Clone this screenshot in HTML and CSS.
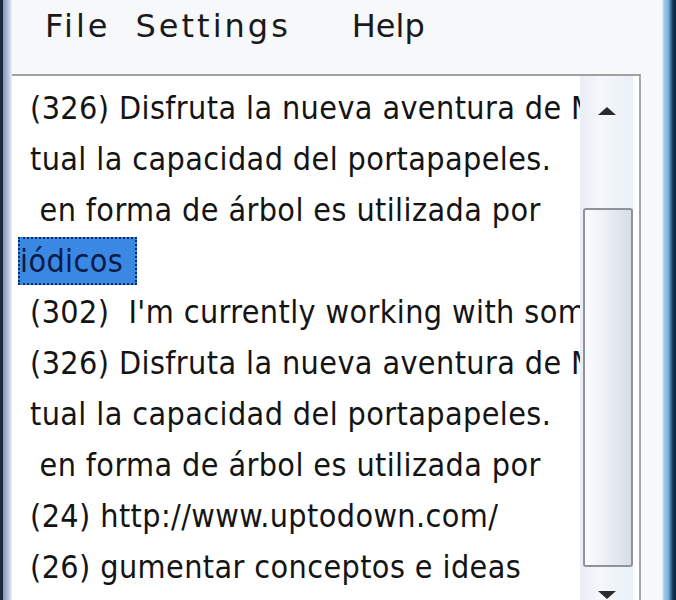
FILE: index.html
```html
<!DOCTYPE html>
<html>
<head>
<meta charset="utf-8">
<link rel="stylesheet" href="styles.css">
</head>
<body>
<div class="window">
  <div class="frame-left"></div>
  <div class="client">
    <div class="menubar">
      <span class="menu-item menu-file">File</span>
      <span class="menu-item menu-settings">Settings</span>
      <span class="menu-item menu-help">Help</span>
    </div>
    <div class="listbox">
      <div class="items">
        <div class="row">(326) Disfruta la nueva aventura de Mario</div>
        <div class="row">tual la capacidad del portapapeles.</div>
        <div class="row">&nbsp;en forma de árbol es utilizada por</div>
        <div class="row row-sel"><span class="sel">iódicos</span></div>
        <div class="row">(302)&nbsp; I'm currently working with something</div>
        <div class="row">(326) Disfruta la nueva aventura de Mario</div>
        <div class="row">tual la capacidad del portapapeles.</div>
        <div class="row">&nbsp;en forma de árbol es utilizada por</div>
        <div class="row">(24) http://www.uptodown.com/</div>
        <div class="row">(26) gumentar conceptos e ideas</div>
      </div>
      <div class="scrollbar">
        <div class="sb-btn sb-up"><svg width="22" height="10" viewBox="0 0 22 10"><path d="M2 9 L11 1 L20 9 Z" fill="#2b2b2b"/></svg></div>
        <div class="sb-track">
          <div class="sb-thumb"></div>
        </div>
        <div class="sb-btn sb-down"><svg width="22" height="10" viewBox="0 0 22 10"><path d="M2 1 L20 1 L11 9 Z" fill="#2b2b2b"/></svg></div>
      </div>
    </div>
  </div>
  <div class="frame-right"></div>
</div>
</body>
</html>
```
FILE: styles.css
```css
html, body {
  margin: 0;
  padding: 0;
  width: 676px;
  height: 600px;
  overflow: hidden;
  background: #ffffff;
}
.window {
  display: flex;
  width: 676px;
  height: 600px;
}
.frame-left {
  width: 12px;
  flex: none;
  background: linear-gradient(to right, #1c2a3c 0, #1c2a3c 3px, #7f95b8 3px, #a7b8d3 7px, #cfd9e8 10px, #eef2f7 12px);
}
.frame-right {
  width: 14px;
  flex: none;
  background: linear-gradient(to right, #f3f6fa 0, #9fcbe9 2px, #7fb6e0 6px, #3a6d95 9px, #16324d 11px, #0d2238 14px);
}
.client {
  flex: 1;
  min-width: 0;
  display: flex;
  flex-direction: column;
  background: #f7f8fa;
}
.menubar {
  height: 74px;
  flex: none;
  display: flex;
  align-items: flex-start;
  padding-left: 33px;
  font-family: "DejaVu Sans", sans-serif;
  font-size: 32px;
  color: #1a1a1a;
}
.menu-item {
  padding-top: 7px;
  letter-spacing: 3px;
}
.menu-file {
  margin-right: 25px;
}
.menu-settings {
  margin-right: 61px;
}
.menu-help {
  letter-spacing: 0;
}
.listbox {
  flex: 1;
  min-width: 0;
  display: flex;
  border-top: 2px solid #a0a0a0;
  border-right: 2px solid #a8a8a8;
  margin-right: 21px;
  padding-right: 6px;
  background: #ffffff;
  min-height: 0;
}
.items {
  flex: 1;
  min-width: 0;
  overflow: hidden;
  padding-top: 7px;
  font-family: "DejaVu Sans Condensed", "DejaVu Sans", sans-serif;
  font-size: 32px;
  letter-spacing: 0.4px;
  color: #141414;
  white-space: nowrap;
}
.row {
  height: 51px;
  line-height: 51px;
  padding-left: 18px;
}
.row-sel {
  padding-left: 6px;
}
.sel {
  display: inline-block;
  line-height: 48px;
  padding: 0 14px 0 2px;
  background: #3a88e2;
  color: #0b1b48;
  outline: 2px dotted #0a2a66;
  outline-offset: -2px;
}
.scrollbar {
  width: 53px;
  flex: none;
  display: flex;
  flex-direction: column;
  background: linear-gradient(to right, #e9eef6, #f4f7fb 40%, #eaf0f8);
  padding-top: 6px;
}
.sb-btn {
  flex: none;
  display: flex;
  align-items: center;
  justify-content: center;
}
.sb-up {
  height: 126px;
  align-items: flex-start;
  padding-top: 24px;
  box-sizing: border-box;
}
.sb-track {
  flex: 1;
  display: flex;
  flex-direction: column;
  padding: 0 0 0 3px;
}
.sb-thumb {
  flex: 1;
  border: 2px solid #8f949c;
  border-radius: 3px;
  background: linear-gradient(to right, #fbfcfe 0, #eef1f6 40%, #d8dde6 100%);
}
.sb-down {
  height: 33px;
  align-items: flex-end;
}
```
